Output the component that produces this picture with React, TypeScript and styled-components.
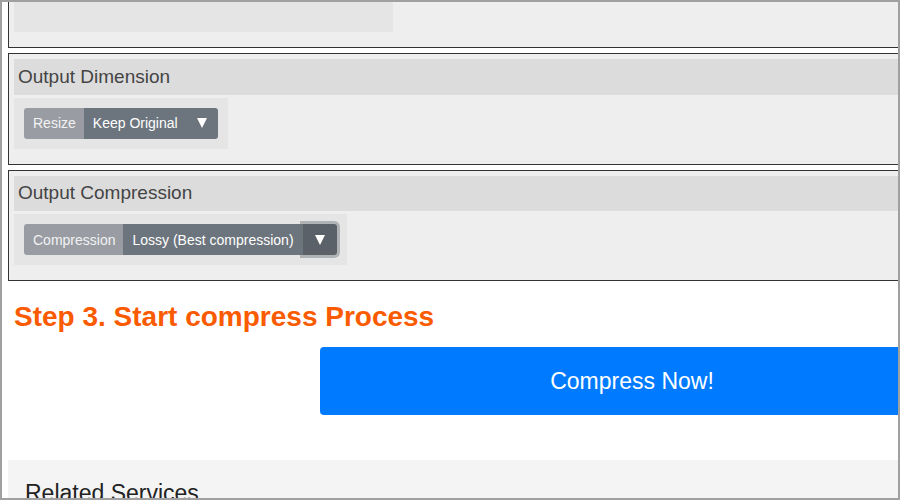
import React from "react";
import styled, { createGlobalStyle } from "styled-components";

const GlobalStyle = createGlobalStyle`
  html, body { margin: 0; padding: 0; background: #fff; }
  body { font-family: "Liberation Sans", Arial, sans-serif; }
  * { box-sizing: border-box; }
`;

const Frame = styled.div`
  width: 900px;
  height: 500px;
  border: 2px solid #a0a0a0;
  overflow: hidden;
  background: #fff;
`;

const Content = styled.div`
  width: 1000px;
  margin: -36px 0 0 6px;
  display: flex;
  flex-direction: column;
`;

const Panel = styled.section`
  border: 1px solid #333;
  background: #eee;
  padding: 5px 5px 15px;
  margin-bottom: 5px;
  display: flex;
  flex-direction: column;
  align-items: flex-start;
`;

const Placeholder = styled.div`
  width: 379px;
  height: 60px;
  background: #e5e5e5;
`;

const PanelHeader = styled.h3`
  align-self: stretch;
  margin: 0 0 3px;
  height: 35.5px;
  display: flex;
  align-items: center;
  padding-left: 4px;
  background: #dcdcdc;
  color: #444;
  font-size: 19px;
  font-weight: normal;
`;

const ControlBox = styled.div`
  display: inline-flex;
  padding: 10px;
  background: #e5e5e5;
`;

const InputGroup = styled.div`
  display: flex;
  height: 31px;
  font-size: 14px;
  border-radius: 3px;
`;

const Addon = styled.span`
  display: flex;
  align-items: center;
  padding: 0 8px 0 9px;
  background: #999da3;
  color: #f2f2f2;
  border-radius: 3px 0 0 3px;
`;

const Select = styled.span<{ $last?: boolean }>`
  display: flex;
  align-items: center;
  gap: 19px;
  padding: 0 ${(p) => (p.$last ? "11px" : "9px")} 0 9px;
  background: #6c757d;
  color: #fff;
  border-radius: ${(p) => (p.$last ? "0 3px 3px 0" : "0")};
`;

const Arrow = styled.span`
  width: 0;
  height: 0;
  border-left: 5.5px solid transparent;
  border-right: 5.5px solid transparent;
  border-top: 10px solid #fff;
`;

const ArrowButton = styled.span`
  display: flex;
  align-items: center;
  justify-content: center;
  width: 34px;
  background: #5a6169;
  border-radius: 0 3px 3px 0;
  box-shadow: 0 0 0 3px rgba(108, 117, 125, 0.45);
`;

const StepTitle = styled.h2`
  margin: 15px 0 0 6px;
  font-size: 28px;
  line-height: 32px;
  font-weight: bold;
  color: #fb5b00;
`;

const ActionRow = styled.div`
  display: flex;
  margin-top: 14px;
  padding-left: 312px;
`;

const PrimaryButton = styled.button`
  width: 624px;
  height: 68px;
  border: none;
  border-radius: 4px;
  background: #007bff;
  color: #fff;
  font-family: "Liberation Sans", Arial, sans-serif;
  font-size: 23px;
`;

const Related = styled.section`
  margin-top: 45px;
  background: #f4f4f4;
  padding: 20px 17px 20px;
`;

const RelatedTitle = styled.h3`
  margin: 0;
  font-size: 23px;
  font-weight: normal;
  color: #222;
`;

export default function App() {
  return (
    <>
      <GlobalStyle />
      <Frame>
        <Content>
          <Panel>
            <Placeholder />
          </Panel>
          <Panel>
            <PanelHeader>Output Dimension</PanelHeader>
            <ControlBox>
              <InputGroup>
                <Addon>Resize</Addon>
                <Select $last>
                  Keep Original
                  <Arrow />
                </Select>
              </InputGroup>
            </ControlBox>
          </Panel>
          <Panel>
            <PanelHeader>Output Compression</PanelHeader>
            <ControlBox>
              <InputGroup>
                <Addon>Compression</Addon>
                <Select>Lossy (Best compression)</Select>
                <ArrowButton>
                  <Arrow />
                </ArrowButton>
              </InputGroup>
            </ControlBox>
          </Panel>
          <StepTitle>Step 3. Start compress Process</StepTitle>
          <ActionRow>
            <PrimaryButton>Compress Now!</PrimaryButton>
          </ActionRow>
          <Related>
            <RelatedTitle>Related Services</RelatedTitle>
          </Related>
        </Content>
      </Frame>
    </>
  );
}
